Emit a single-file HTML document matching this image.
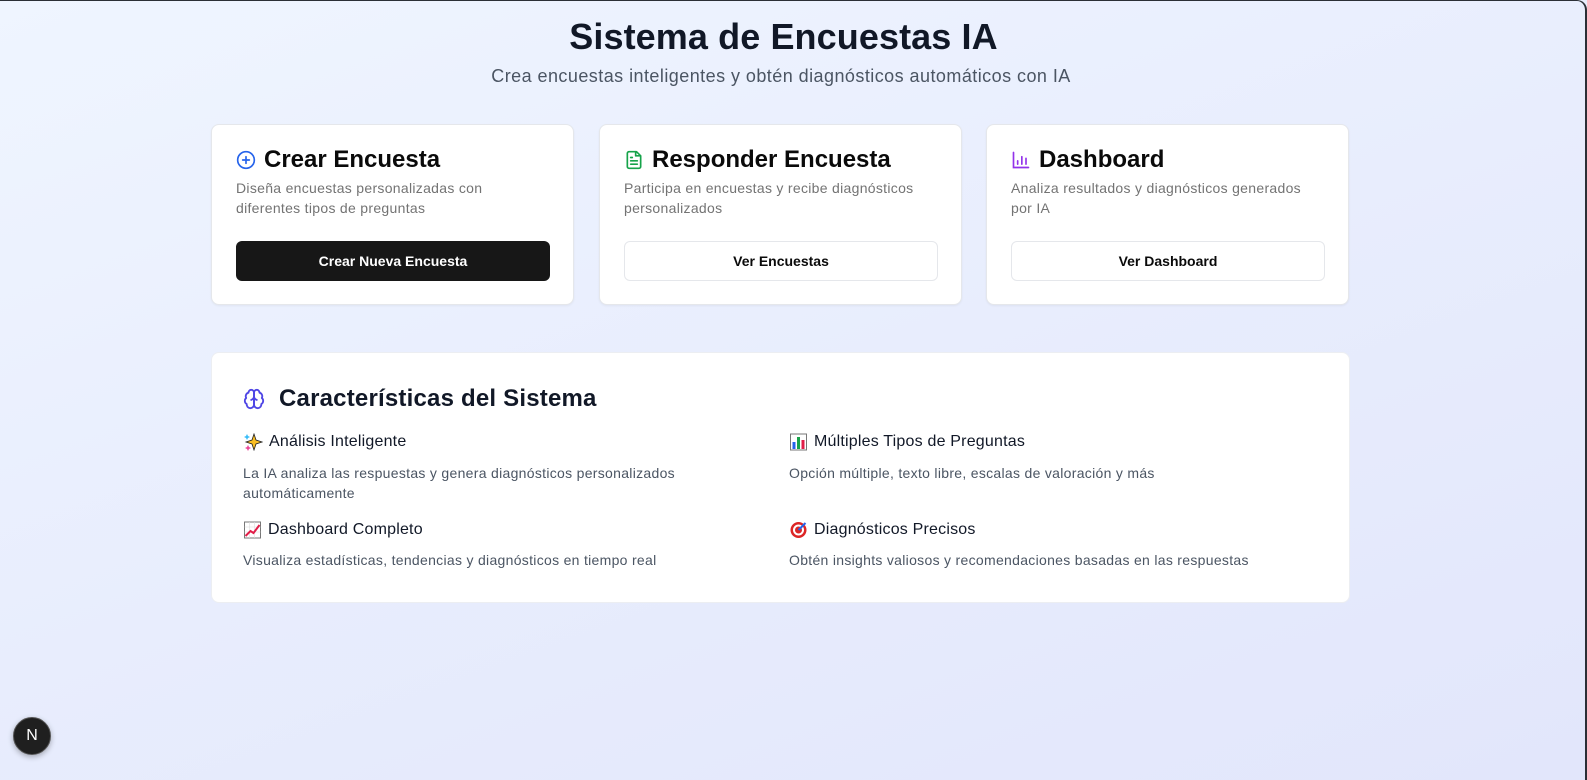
<!DOCTYPE html>
<html><head><meta charset="utf-8"><style>
*{box-sizing:border-box;margin:0;padding:0}
html,body{width:1587px;height:780px;overflow:hidden}
body{font-family:"Liberation Sans",sans-serif;background:linear-gradient(160deg,#eff5ff 0%,#e8edfd 50%,#e2e6fb 100%);position:relative;color:#0f172a}
.frame{position:absolute;left:0;top:0;width:1587px;height:780px;border-top:1px solid #2b2f36;border-right:2px solid #2b2f36;border-top-right-radius:10px;pointer-events:none}
h1{position:absolute;top:16px;left:0;width:1567px;text-align:center;font-size:36px;font-weight:700;color:#111827;letter-spacing:0.1px}
.sub{position:absolute;top:66px;left:0;width:1562px;text-align:center;font-size:18px;color:#4b5563;letter-spacing:0.45px}
.card{position:absolute;top:124px;width:363px;height:181px;background:#fff;border:1px solid #e5e7eb;border-radius:8px;box-shadow:0 1px 2px rgba(0,0,0,.05);padding:0 24px}
.ct{position:absolute;top:146px;display:flex;align-items:center;font-size:24px;font-weight:600;color:#0a0a0a}
.ct svg{margin-right:8px}
.cd{position:absolute;top:178px;font-size:14px;line-height:20px;color:#737373;width:300px;letter-spacing:0.3px}
.btn{position:absolute;top:241px;width:314px;height:40px;border-radius:6px;display:flex;align-items:center;justify-content:center;font-size:14px;font-weight:600}
.b1{background:#171717;color:#fff}
.b2{background:#fff;border:1px solid #e5e7eb;color:#0a0a0a}
.feat{position:absolute;left:211px;top:352px;width:1139px;height:251px;background:#fff;border-radius:8px;border:1px solid #eceef2}
.fh{position:absolute;left:243px;top:385px;display:flex;align-items:center;font-size:24px;font-weight:600;color:#111827;letter-spacing:0.2px}
.it{position:absolute;font-size:16px;color:#111827;display:flex;align-items:center;letter-spacing:0.2px}
.it svg{margin-right:6px}
.dd{position:absolute;font-size:14px;line-height:20px;color:#4b5563;letter-spacing:0.3px}
.nb{position:absolute;left:13px;top:717px;width:38px;height:38px;border-radius:50%;background:#1f1f1f;border:1px solid #555;color:#fff;display:flex;align-items:center;justify-content:center;font-size:16px;box-shadow:0 2px 6px rgba(0,0,0,.3)}
</style></head><body>
<h1>Sistema de Encuestas IA</h1>
<div class="sub">Crea encuestas inteligentes y obtén diagnósticos automáticos con IA</div>

<div class="card" style="left:211px"></div>
<div class="ct" style="left:236px"><svg width="20" height="20" viewBox="0 0 24 24" fill="none" stroke="#2563eb" stroke-width="2" stroke-linecap="round"><circle cx="12" cy="12" r="10"/><path d="M8 12h8M12 8v8"/></svg>Crear Encuesta</div>
<div class="cd" style="left:236px">Diseña encuestas personalizadas con diferentes tipos de preguntas</div>
<div class="btn b1" style="left:236px">Crear Nueva Encuesta</div>

<div class="card" style="left:599px"></div>
<div class="ct" style="left:624px"><svg width="20" height="20" viewBox="0 0 24 24" fill="none" stroke="#16a34a" stroke-width="2" stroke-linecap="round" stroke-linejoin="round"><path d="M15 2H6a2 2 0 0 0-2 2v16a2 2 0 0 0 2 2h12a2 2 0 0 0 2-2V7z"/><path d="M14 2v5h5M16 13H8M16 17H8M10 9H8"/></svg>Responder Encuesta</div>
<div class="cd" style="left:624px">Participa en encuestas y recibe diagnósticos personalizados</div>
<div class="btn b2" style="left:624px">Ver Encuestas</div>

<div class="card" style="left:986px"></div>
<div class="ct" style="left:1011px"><svg width="20" height="20" viewBox="0 0 24 24" fill="none" stroke="#9333ea" stroke-width="2" stroke-linecap="round"><path d="M3 3v18h18M8 17v-4M13 17V8M18 17v-7"/></svg>Dashboard</div>
<div class="cd" style="left:1011px">Analiza resultados y diagnósticos generados por IA</div>
<div class="btn b2" style="left:1011px">Ver Dashboard</div>

<div class="feat"></div>
<div class="fh"><svg width="22" height="22" viewBox="0 0 24 24" fill="none" stroke="#4f46e5" stroke-width="2" stroke-linecap="round" stroke-linejoin="round" style="margin-right:14px"><path d="M12 5a3 3 0 1 0-5.997.125 4 4 0 0 0-2.526 5.77 4 4 0 0 0 .556 6.588A4 4 0 1 0 12 18Z"/><path d="M12 5a3 3 0 1 1 5.997.125 4 4 0 0 1 2.526 5.77 4 4 0 0 1-.556 6.588A4 4 0 1 1 12 18Z"/><path d="M12 5v13M9 13a4.5 4.5 0 0 0 3-4M15 13a4.5 4.5 0 0 1-3-4"/></svg>Características del Sistema</div>

<div class="it" style="left:243px;top:433px"><svg width="20" height="18" viewBox="0 0 20 18"><path d="M11 1l2 6 6 2-6 2-2 6-2-6-6-2 6-2z" fill="#fbbf24" stroke="#222" stroke-width=".8"/><path d="M4 1l1 2 2 1-2 1-1 2-1-2-2-1 2-1z" fill="#38bdf8"/><path d="M5 12l1 2 2 1-2 1-1 2-1-2-2-1 2-1z" fill="#ec4899"/></svg>Análisis Inteligente</div>
<div class="dd" style="left:243px;top:463px;width:470px">La IA analiza las respuestas y genera diagnósticos personalizados automáticamente</div>
<div class="it" style="left:243px;top:521px"><svg width="19" height="18" viewBox="0 0 18 18"><rect x="1" y="1" width="16" height="16" fill="#fff" stroke="#777"/><path d="M1 6h16M1 11h16M6 1v16M11 1v16" stroke="#ddd" stroke-width=".6"/><path d="M2 15l5-5 3 2 6-8" fill="none" stroke="#e11d48" stroke-width="2"/></svg>Dashboard Completo</div>
<div class="dd" style="left:243px;top:550px">Visualiza estadísticas, tendencias y diagnósticos en tiempo real</div>

<div class="it" style="left:789px;top:433px"><svg width="19" height="18" viewBox="0 0 18 18"><rect x="1" y="1" width="16" height="16" fill="#fff" stroke="#777"/><rect x="3" y="9" width="3" height="7" fill="#2563eb"/><rect x="7.5" y="4" width="3" height="12" fill="#16a34a"/><rect x="12" y="7" width="3" height="9" fill="#e11d48"/></svg>Múltiples Tipos de Preguntas</div>
<div class="dd" style="left:789px;top:463px">Opción múltiple, texto libre, escalas de valoración y más</div>
<div class="it" style="left:789px;top:521px"><svg width="19" height="18" viewBox="0 0 18 18"><circle cx="9" cy="9" r="8" fill="#dc2626"/><circle cx="9" cy="9" r="5.5" fill="#fff"/><circle cx="9" cy="9" r="3.5" fill="#dc2626"/><path d="M9 9l7-7" stroke="#2563eb" stroke-width="2"/></svg>Diagnósticos Precisos</div>
<div class="dd" style="left:789px;top:550px">Obtén insights valiosos y recomendaciones basadas en las respuestas</div>

<div class="nb">N</div>
<div class="frame"></div>
</body></html>
